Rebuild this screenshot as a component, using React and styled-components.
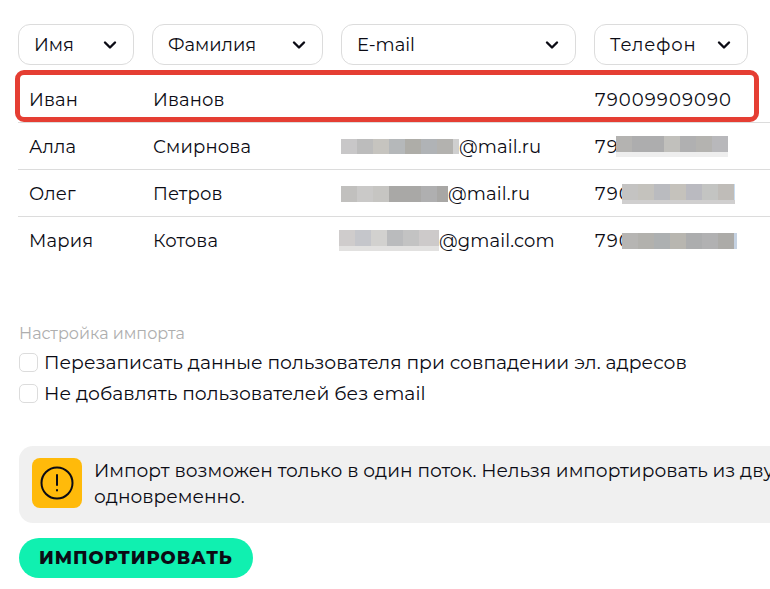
import React from 'react';
import styled, { createGlobalStyle } from 'styled-components';

const Global = createGlobalStyle`
  html, body { margin: 0; padding: 0; background: #fff; overflow: hidden; width: 770px; height: 589px; }
  body { font-family: "Montserrat", "Inter", "Noto Sans", sans-serif; color: #0b0b14; }
`;
const Page = styled.div`width: 770px; height: 589px; overflow: hidden; padding: 24px 0 0 18px; box-sizing: border-box;`;
const Selects = styled.div`display: flex; gap: 18px; margin-bottom: 11px;`;
const Select = styled.div`
  width: ${p => p.$w}px; height: 41px; box-sizing: border-box; flex: none;
  border: 1px solid #dcdcdc; border-radius: 12px;
  display: flex; align-items: center; justify-content: space-between;
  padding: 0 15px 0 15px; font-size: 18px; letter-spacing: ${p => p.$ls || 0}px;
`;
const Row = styled.div`
  position: relative; height: 47px; box-sizing: border-box; width: 752px;
  border-bottom: 1px solid ${p => p.$last ? 'transparent' : '#dcdcdc'}; padding: 1px 0 0 11px;
  display: grid; grid-template-columns: 124px 188px 254px 1fr; align-items: center;
  font-size: 18px; letter-spacing: .15px;
  ${p => p.$hl && `&::after { content: ""; position: absolute; left: -3px; top: -6px; right: 11px; bottom: 0; border: 5px solid #e53e33; border-radius: 9px; }`}
`;
const Cell = styled.div`display: flex; align-items: center; white-space: nowrap; position: relative;`;
const Phone = styled(Cell)`letter-spacing: 1.1px;`;
const Mosaic = styled.span`
  display: inline-flex; flex: none; overflow: hidden; box-sizing: content-box;
  width: ${p => p.$w}px; height: ${p => p.$h}px; margin-left: ${p => p.$ml || 0}px;
  border-bottom: ${p => p.$strip ? `${p.$sh || 5}px solid ${p.$strip}` : '0'};
`;
const Tile = styled.span`width: 16px; flex: none; height: 100%; display: block;`;
const Caption = styled.div`margin: 60px 0 4px 1px; font-size: 16px; color: #aeaeae;`;
const Check = styled.label`display: flex; align-items: center; gap: 6px; height: 31px; margin-left: 1px; font-size: 18.75px;`;
const Box = styled.span`width: 19px; height: 19px; box-sizing: border-box; border: 1px solid #dcdcdc; border-radius: 5px; flex: none;`;
const Note = styled.div`
  width: 880px; height: 77px; box-sizing: border-box; margin-top: 37px; margin-left: 1px;
  background: #f0f0f0; border-radius: 14px; padding: 12px 13px;
  display: flex; gap: 12px; font-size: 18.6px; line-height: 26px;
`;
const NoteIcon = styled.div`width: 50px; height: 50px; flex: none; background: #ffba0a; border-radius: 8px; display: flex; align-items: center; justify-content: center;`;
const Button = styled.button`
  display: block; margin: 15px 0 0 1px; width: 234px; height: 40px; border: 0; border-radius: 20px;
  background: #10f0b0; color: #0b0b14; font: 800 18px "Montserrat", "Inter", sans-serif; letter-spacing: .95px; padding: 0;
`;
const Chevron = () => (
  <svg width="16" height="16" viewBox="0 0 16 16" fill="none" stroke="#0b0b14" strokeWidth="2.4" strokeLinecap="round" strokeLinejoin="round"><path d="M3 5.5l5 5 5-5" /></svg>
);
const Blur = ({ colors, w, h, ml, strip, sh }) => (
  <Mosaic $w={w} $h={h} $ml={ml} $strip={strip} $sh={sh}>{colors.map((c, i) => <Tile key={i} style={{ background: c }} />)}</Mosaic>
);
const heads = [['Имя', 116], ['Фамилия', 171], ['E-mail', 235], ['Телефон', 154, .8]];

export default function App() {
  return (
    <Page>
      <Global />
      <Selects>{heads.map(([t, w, ls]) => <Select key={t} $w={w} $ls={ls}>{t}<Chevron /></Select>)}</Selects>
      <Row $hl><Cell>Иван</Cell><Cell>Иванов</Cell><Cell /><Phone>79009909090</Phone></Row>
      <Row><Cell>Алла</Cell><Cell>Смирнова</Cell>
        <Cell><Blur w={118} h={15} colors={['#c8c7c8','#bcbcbc','#c6c4bf','#b5b8ba','#aeada8','#b0b3b6','#b3b2af','#cfcfcf']} />@mail.ru</Cell>
        <Phone>79<Blur w={112} h={16} ml={-3} strip="#eeeeee" colors={['#b4b3b1','#adadae','#adadae','#c1c0bc','#b0b0b1','#b4b3b0','#b8b8bb']} /></Phone></Row>
      <Row><Cell>Олег</Cell><Cell>Петров</Cell>
        <Cell><Blur w={107} h={16} colors={['#c1c0be','#cac9c8','#c6c5c2','#a9a8a6','#a9a8a6','#afafb0','#a8a7a5']} />@mail.ru</Cell>
        <Phone>790<Blur w={113} h={16} ml={-10} strip="#d0cfcf" sh={4} colors={['#c4c3c2','#c4c2bd','#babbbf','#c5c2bc','#babac0','#c3c4c2','#bfbcb8','#c8dcf0']} /></Phone></Row>
      <Row $last><Cell>Мария</Cell><Cell>Котова</Cell>
        <Cell><Blur w={100} h={16} ml={-2} strip="#e2e1e0" colors={['#cfcccc','#c5c6cb','#d2d1cf','#babbbd','#c3c3c3','#cdcaca','#cdcaca']} />@gmail.com</Cell>
        <Phone>790<Blur w={115} h={16} ml={-10} colors={['#b6b5b3','#b2b1ad','#adb0b1','#b8b6b0','#acadae','#b1b1b2','#acaba8','#c5d2e2']} /></Phone></Row>
      <Caption>Настройка импорта</Caption>
      <Check><Box />Перезаписать данные пользователя при совпадении эл. адресов</Check>
      <Check><Box />Не добавлять пользователей без email</Check>
      <Note>
        <NoteIcon>
          <svg width="34" height="34" viewBox="0 0 34 34" fill="none" stroke="#0b0b14" strokeWidth="2" strokeLinecap="round"><circle cx="17" cy="17" r="15.5" /><path d="M17 9v10" /><path d="M17 24v.5" /></svg>
        </NoteIcon>
        <div>Импорт возможен только в один поток. Нельзя импортировать из двух файлов одновременно.</div>
      </Note>
      <Button>ИМПОРТИРОВАТЬ</Button>
    </Page>
  );
}
